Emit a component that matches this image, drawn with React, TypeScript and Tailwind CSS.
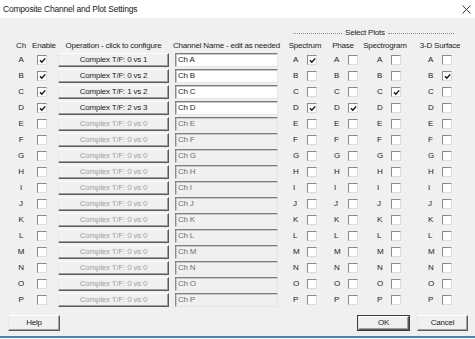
import React from "react"

const rows = [
  { ch: "A", on: true, op: "Complex T/F: 0 vs 1", plots: [true, false, false, false] },
  { ch: "B", on: true, op: "Complex T/F: 0 vs 2", plots: [false, false, false, true] },
  { ch: "C", on: true, op: "Complex T/F: 1 vs 2", plots: [false, false, true, false] },
  { ch: "D", on: true, op: "Complex T/F: 2 vs 3", plots: [true, true, false, false] },
  ..."EFGHIJKLMNOP".split("").map((c) => ({
    ch: c,
    on: false,
    op: "Complex T/F: 0 vs 0",
    plots: [false, false, false, false],
  })),
]

// widths of the four plot cells (letter + box)
const plotCells = ["w-[41px]", "w-[43px]", "w-[51px]", "w-[40px]"]

const Check = ({ checked }: { checked: boolean }) => (
  <div className="w-[10px] h-[10px] bg-white border-t border-l border-t-[#8a8a8a] border-l-[#8a8a8a] border-b border-r border-b-[#dcdcdc] border-r-[#dcdcdc] flex items-center justify-center shrink-0">
    {checked && (
      <svg width="7" height="7" viewBox="0 0 7 7">
        <path d="M1 3.2 L2.8 5.2 L6.2 1.4" stroke="#111" strokeWidth="1.4" fill="none" />
      </svg>
    )}
  </div>
)

const WinButton = ({ children, className = "" }: { children: React.ReactNode; className?: string }) => (
  <div
    className={
      "h-[14px] flex items-center justify-center bg-[#f0f0f0] border-t border-l border-t-white border-l-[#e8e8e8] border-b border-r border-b-[#5a5a5a] border-r-[#5a5a5a] shadow-[inset_-1px_-1px_0_#a0a0a0] whitespace-nowrap " +
      className
    }
  >
    {children}
  </div>
)

export default function App() {
  return (
    <div className="w-[475px] h-[339px] bg-[#f0f0f0] flex flex-col text-[#1c1c1c] text-[8px] tracking-[-0.2px] leading-none font-['Liberation_Sans',Arial,sans-serif] overflow-hidden">
      {/* title bar */}
      <div className="h-[18px] bg-white flex items-center justify-between pl-[3px] pr-[4px] shrink-0">
        <span className="text-[8.5px] text-[#1a1a1a]">Composite Channel and Plot Settings</span>
        <svg width="9" height="9" viewBox="0 0 9 9">
          <path d="M0.5 0.5 L8.5 8.5 M8.5 0.5 L0.5 8.5" stroke="#222" strokeWidth="0.9" />
        </svg>
      </div>

      {/* select plots caption */}
      <div className="mt-[9px] h-[12px] flex items-center pl-[293px] shrink-0">
        <div className="w-[49px] border-t border-dotted border-[#8c8c8c]" />
        <span className="px-[3px]">Select Plots</span>
        <div className="w-[66px] border-t border-dotted border-[#8c8c8c]" />
      </div>

      {/* column headers */}
      <div className="h-[13px] flex items-center shrink-0 whitespace-nowrap">
        <div className="w-[30px] pl-[12px] flex justify-center">Ch</div>
        <div className="w-[28px] pl-[2px]">Enable</div>
        <div className="w-[111px] flex justify-center">Operation - click to configure</div>
        <div className="ml-[6px] w-[103px] flex justify-center">Channel Name - edit as needed</div>
        <div className="ml-[7px] w-[40px] flex justify-center">Spectrum</div>
        <div className="w-[36px] flex justify-center">Phase</div>
        <div className="w-[48px] flex justify-center">Spectrogram</div>
        <div className="w-[62px] flex justify-center">3-D Surface</div>
      </div>

      {/* channel rows */}
      <div className="flex flex-col shrink-0">
        {rows.map((r) => (
          <div key={r.ch} className="h-[16px] flex items-center">
            <div className="w-[30px] pl-[12px] flex justify-center">{r.ch}</div>
            <div className="w-[28px] pl-[7px]">
              <Check checked={r.on} />
            </div>
            <WinButton className={"w-[111px] " + (r.on ? "text-[#1c1c1c]" : "text-[#a3a3a3]")}>{r.op}</WinButton>
            <div
              className={
                "ml-[6px] w-[103px] h-[14px] flex items-center pl-[2px] border-t border-l border-t-[#7a7a7a] border-l-[#8a8a8a] border-b border-r border-b-[#e6e6e6] border-r-[#e6e6e6] shadow-[inset_1px_1px_0_#c8c8c8] " +
                (r.on ? "bg-white text-[#1c1c1c]" : "bg-[#f0f0f0] text-[#6d6d6d]")
              }
            >
              Ch {r.ch}
            </div>
            <div className="ml-[15px] flex items-center">
              {r.plots.map((p, i) => (
                <div key={i} className={"flex items-center " + plotCells[i]}>
                  <span className="w-[14px]">{r.ch}</span>
                  <Check checked={p} />
                </div>
              ))}
            </div>
          </div>
        ))}
      </div>

      {/* buttons */}
      <div className="mt-[7px] flex items-center pl-[8px] pr-[7px] shrink-0">
        <WinButton className="w-[52px] h-[16px]">Help</WinButton>
        <div className="ml-auto flex items-center gap-[7px]">
          <div className="border border-[#3c3c3c]">
            <WinButton className="w-[51px] h-[14px]">OK</WinButton>
          </div>
          <WinButton className="w-[51px] h-[16px]">Cancel</WinButton>
        </div>
      </div>

      <div className="flex-1" />
      <div className="h-[2px] bg-[#3f87b4] shrink-0" />
      <div className="h-[1px] bg-white shrink-0" />
    </div>
  )
}
